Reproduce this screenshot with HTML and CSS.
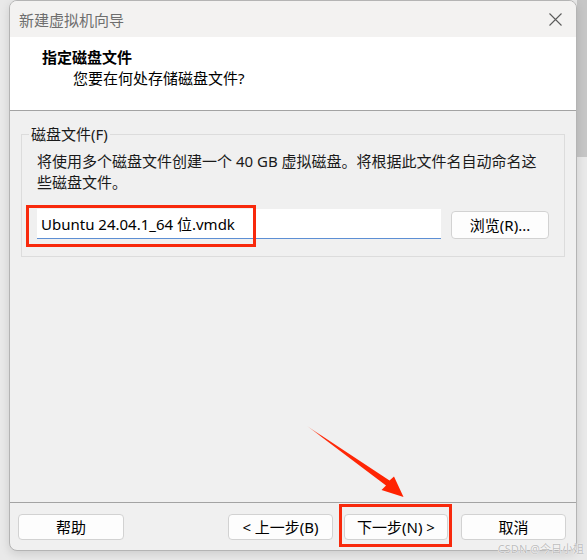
FILE: index.html
```html
<!DOCTYPE html>
<html lang="zh-CN">

<head>
    <meta charset="utf-8">
    <title>新建虚拟机向导</title>
    <link rel="stylesheet" href="styles.css">
</head>

<body>

    <div class="vindue">
        <div class="titel">
            <span>新建虚拟机向导</span>
            <svg class="luk" width="13" height="13" viewBox="0 0 13 13">
                <path d="M0.5 0.5 L12.5 12.5 M12.5 0.5 L0.5 12.5" stroke="#5c5c5c" stroke-width="1.1" fill="none"/>
            </svg>
        </div>

        <header>
            <h1>指定磁盘文件</h1>
            <p>您要在何处存储磁盘文件?</p>
        </header>

        <main>
            <fieldset>
                <legend>磁盘文件(F)</legend>
                <p class="info">将使用多个磁盘文件创建一个 40 GB 虚拟磁盘。将根据此文件名自动命名这<br>些磁盘文件。</p>
                <div class="fil-raekke">
                    <input class="felt" type="text" value="Ubuntu 24.04.1_64 位.vmdk">
                    <button class="knap gennemse">浏览(R)...</button>
                </div>
            </fieldset>
        </main>

        <footer>
            <button class="knap">帮助</button>
            <button class="knap tilbage">&lt; 上一步(B)</button>
            <button class="knap naeste">下一步(N) &gt;</button>
            <button class="knap annuller">取消</button>
        </footer>
    </div>

    <!-- annotations on top of the screenshot -->
    <div class="ramme ramme-fil"></div>
    <div class="ramme ramme-naeste"></div>

    <svg class="pil" width="587" height="560" viewBox="0 0 587 560">
        <defs>
            <linearGradient id="hale" x1="307" y1="426" x2="403" y2="497" gradientUnits="userSpaceOnUse">
                <stop offset="0" stop-color="#ff3a14" stop-opacity="0.3"/>
                <stop offset="0.15" stop-color="#ff2a0a"/>
                <stop offset="1" stop-color="#ff2200"/>
            </linearGradient>
        </defs>
        <polygon points="307,426 389.5,480.5 394,476.5 403.5,497 381.5,490 386,485.5" fill="url(#hale)"/>
    </svg>

    <div class="vandmaerke">CSDN @今日小姐</div>

</body>

</html>
```

FILE: styles.css
```css
html {
    background: linear-gradient(#c6c6c6, #c6c6c6) right top / 10px 157px no-repeat, #e9e9e9;
}

body {
    margin: 0;
    position: relative;
    width: 587px;
    height: 560px;
    overflow: hidden;
    font-family: "Noto Sans", "Noto Sans CJK SC", sans-serif;
    font-size: 15px;
    color: #1a1a1a;
}

.vindue {
    box-sizing: border-box;
    margin-left: 9px;
    width: 568px;
    height: 551px;
    border: 1px solid #b4b4b4;
    border-radius: 8px;
    background-color: #f0f0f0;
    box-shadow: 0 3px 10px rgba(0, 0, 0, 0.12);
    overflow: hidden;
}

.titel {
    display: flex;
    align-items: center;
    justify-content: space-between;
    height: 36px;
    padding: 0 14px 0 9px;
    background-color: #f3f2f1;
    color: #6e6e6e;
}

.luk {
    display: block;
}

header {
    height: 73px;
    box-sizing: content-box;
    padding: 0;
    background-color: white;
    border-bottom: 1px solid #a3a3a3;
    color: #000;
}

header h1 {
    margin: 0;
    padding: 10px 0 0 32px;
    font-size: 15px;
    line-height: 20px;
    font-weight: bold;
}

header p {
    margin: 1px 0 0 63px;
    line-height: 20px;
}

main {
    height: 378px;
    padding: 13px 11px 0 11px;
    border-bottom: 1px solid #a3a3a3;
    box-sizing: content-box;
}

fieldset {
    margin: 0;
    padding: 0 15px 17px 15px;
    border: 1px solid #dcdcdc;
}

legend {
    margin-left: -8px;
    padding: 0 2px;
    line-height: 20px;
}

.info {
    margin: 7px 0 0 0;
    line-height: 21px;
}

.fil-raekke {
    display: flex;
    align-items: flex-end;
    gap: 10px;
    margin-top: 16px;
}

.felt {
    flex: 1;
    box-sizing: border-box;
    height: 30px;
    margin: 0;
    padding: 0 4px;
    border: none;
    border-bottom: 1px solid #5d8fd4;
    background-color: white;
    font-family: "Noto Sans", "Noto Sans CJK SC", sans-serif;
    font-size: 15px;
    color: #000;
}

.knap {
    box-sizing: border-box;
    height: 26px;
    width: 105px;
    margin: 0;
    padding: 0;
    border: 1px solid #d2d2d2;
    border-radius: 4px;
    background-color: #fdfdfd;
    font-family: "Noto Sans", "Noto Sans CJK SC", sans-serif;
    font-size: 15px;
    line-height: 22px;
    color: #000;
}

.gennemse {
    width: 98px;
    height: 28px;
}

footer {
    display: flex;
    padding: 11px 10px 0 8px;
}

footer .knap:first-child {
    width: 106px;
}

.tilbage {
    margin-left: auto;
}

.naeste {
    width: 104px;
    margin-left: 11px;
}

.annuller {
    margin-left: 13px;
}

.ramme {
    position: absolute;
    box-sizing: border-box;
    border: 3px solid #f8290c;
}

.ramme-fil {
    left: 26px;
    top: 205px;
    width: 230px;
    height: 42px;
}

.ramme-naeste {
    left: 339px;
    top: 504px;
    width: 113px;
    height: 43px;
}

.pil {
    position: absolute;
    left: 0;
    top: 0;
    pointer-events: none;
}

.vandmaerke {
    position: absolute;
    right: 3px;
    top: 541px;
    font-size: 11px;
    line-height: 16px;
    color: #bdbdbd;
    text-shadow: 0 0 1px #ffffff, 0 0 1px #ffffff;
}
```
